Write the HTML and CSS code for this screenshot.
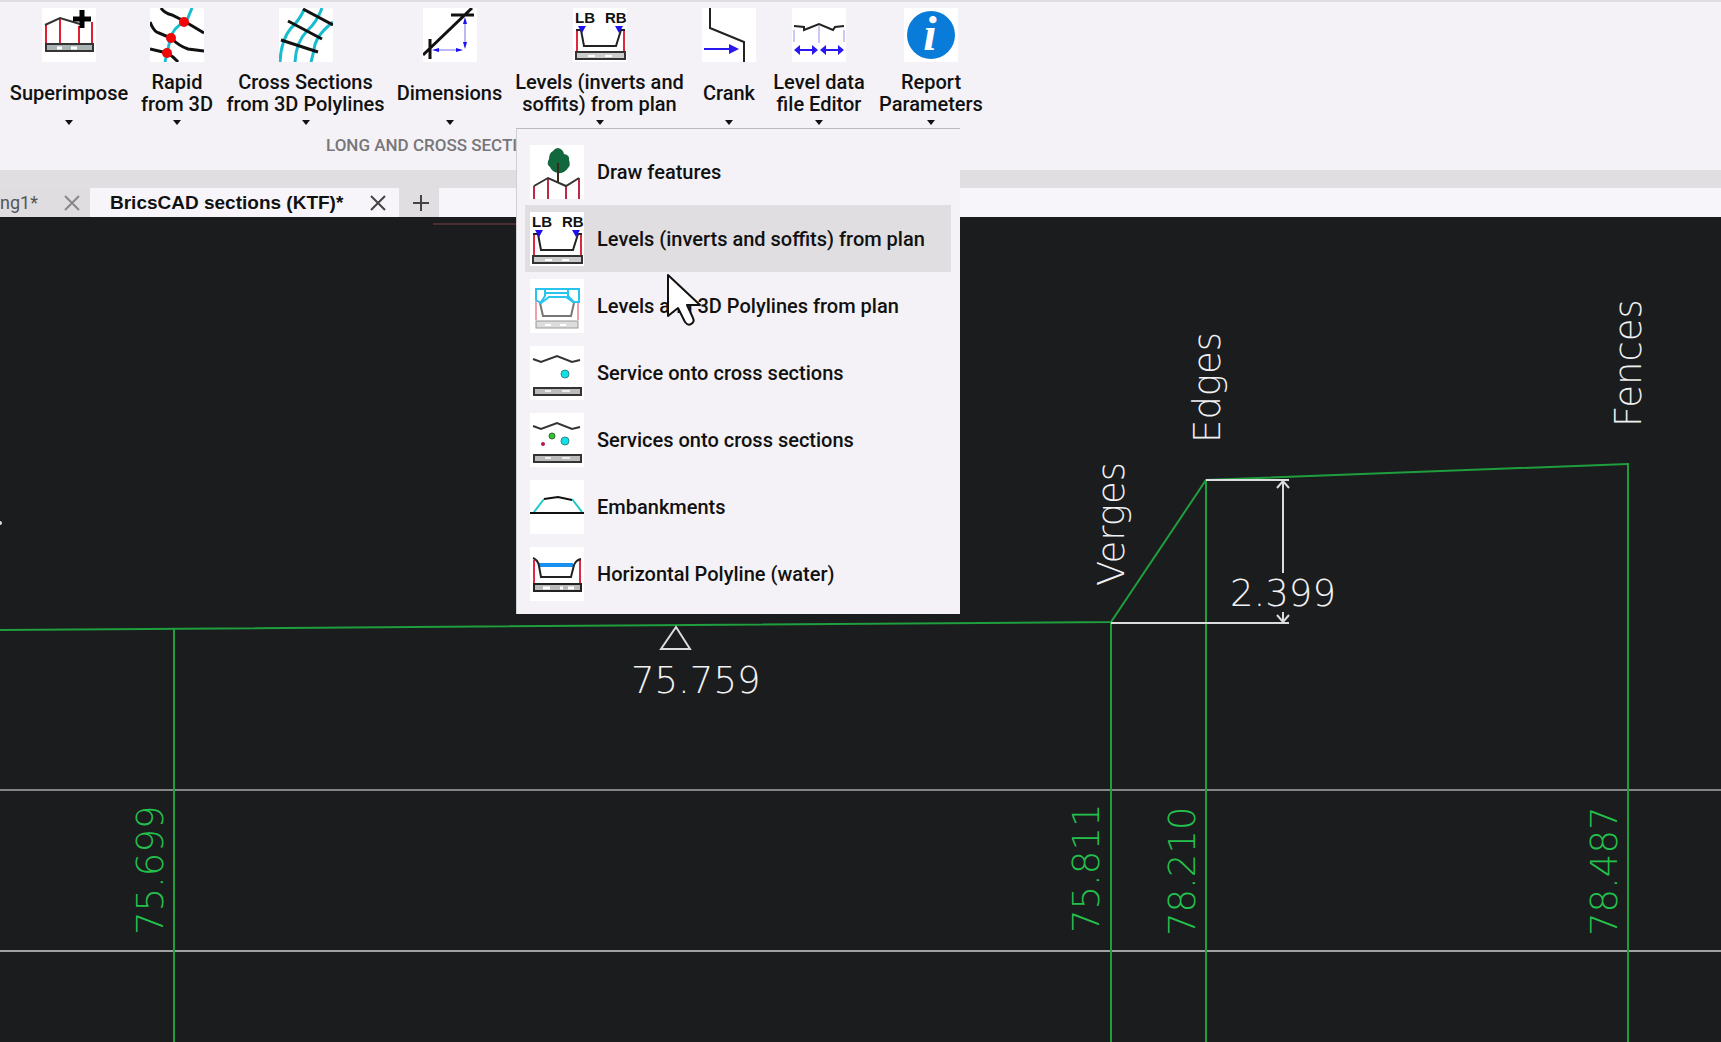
FILE: index.html
```html
<!DOCTYPE html>
<html lang="en">
<head>
<meta charset="utf-8">
<title>BricsCAD sections (KTF)</title>
<link rel="stylesheet" href="styles.css">
</head>
<body>
<header class="ribbon">
  <div class="tools">
    <div class="tool">
      <button class="tool-button" type="button">
        <svg class="icon" viewBox="0 0 54 54"><rect width="54" height="54" fill="#fff"/><path d="M4 17v18M18 11v24M37 18v17M50 14v21" stroke="#e02030" stroke-width="2"/><path d="M3 17l15-7 20 6" fill="none" stroke="#333" stroke-width="2"/><rect x="4" y="36" width="47" height="7" fill="#aab4b4" stroke="#333" stroke-width="2"/><path d="M15 40h5M29 40h6" stroke="#fff" stroke-width="3"/><path d="M40 2v18M31 11h18" stroke="#000" stroke-width="5"/></svg>
        <span class="tool-label">Superimpose</span>
        <span class="arrow"></span>
      </button>
    </div>
    <div class="tool">
      <button class="tool-button" type="button">
        <svg class="icon" viewBox="0 0 54 54"><rect width="54" height="54" fill="#fff"/><path d="M42 0l-5 12Q22 20 20 32l-5 22" fill="none" stroke="#18bcd0" stroke-width="3"/><path d="M11 0q3 5 11 7l12 6 20 12M0 14q4 10 9 11l12 5q8 8 17 11l16 2M0 41l17 4q6 3 11 9" fill="none" stroke="#111" stroke-width="3"/><g fill="#f00808"><circle cx="34" cy="14" r="5"/><circle cx="21" cy="30" r="5"/><circle cx="17" cy="45" r="5"/></g></svg>
        <span class="tool-label">Rapid<br>from 3D</span>
        <span class="arrow"></span>
      </button>
    </div>
    <div class="tool">
      <button class="tool-button" type="button">
        <svg class="icon" viewBox="0 0 54 54"><rect width="54" height="54" fill="#fff"/><path d="M25 2Q19 14 12 20 2 32 1 54M43 0Q38 14 28 23 17 34 16 54M54 14Q36 28 35 42l-3 12" fill="none" stroke="#18bcd0" stroke-width="3"/><path d="M24 1l30 16M9 13l34 18M2 32l37 12" stroke="#111" stroke-width="3"/></svg>
        <span class="tool-label">Cross Sections<br>from 3D Polylines</span>
        <span class="arrow"></span>
      </button>
    </div>
    <div class="tool">
      <button class="tool-button" type="button">
        <svg class="icon" viewBox="0 0 54 54"><rect width="54" height="54" fill="#fff"/><path d="M0 47L49 0M28 7h23M7 31v20" stroke="#111" stroke-width="3"/><path d="M42 12v26M12 42h26" stroke="#7a70f0"/><path d="M42 9l2 7h-4zM42 41l2-7h-4zM9 42l7-2v4zM40 42l-7-2v4z" fill="#1c10f0"/></svg>
        <span class="tool-label">Dimensions</span>
        <span class="arrow"></span>
      </button>
    </div>
    <div class="tool">
      <button class="tool-button" type="button" aria-expanded="true">
        <svg class="icon" viewBox="0 0 54 54">
          <g id="banks">
            <rect width="54" height="54" fill="#fff"/>
            <text class="bank-text" x="2" y="15">LB</text>
            <text class="bank-text" x="32" y="15">RB</text>
            <path d="M4 23v21M51 23v21" stroke="#e0283c" stroke-width="2"/>
            <path d="M3 22h5l3 16h32l5-16h4" fill="none" stroke="#222" stroke-width="2"/>
            <path d="M5 18h8l-4 7zM42 18h8l-4 7z" fill="#1c10f0"/>
            <rect x="3" y="44" width="49" height="7" fill="#ccc" stroke="#333" stroke-width="2"/>
            <path d="M15 48h7M32 48h7" stroke="#fff" stroke-width="2"/>
          </g>
        </svg>
        <span class="tool-label">Levels (inverts and<br>soffits) from plan</span>
        <span class="arrow"></span>
      </button>
      <div class="menu">
        <button class="menu-item" type="button">
          <svg class="icon" viewBox="0 0 54 54"><rect width="54" height="54" fill="#fff"/><path d="M4 41v13M18 34v20M36 41v13M49 33v21" stroke="#c02848" stroke-width="2"/><path d="M4 41l14-8 18 8 13-8" fill="none" stroke="#333" stroke-width="2"/><path d="M28 3q5 1 6 6 6 1 5 6 2 5-1 8-4 6-10 5-6-1-8-6-4-3-1-8 0-6 4-8 2-3 5-3z" fill="#12673c"/><path d="M28 18v19" stroke="#3a2a1c" stroke-width="2"/></svg>
          Draw features
        </button>
        <button class="menu-item active" type="button">
          <svg class="icon" viewBox="0 0 54 54"><use href="#banks"/></svg>
          Levels (inverts and soffits) from plan
        </button>
        <button class="menu-item" type="button">
          <svg class="icon" viewBox="0 0 54 54"><rect width="54" height="54" fill="#fff"/><path d="M6 22v19M48 22v19" stroke="#f0a0ac" stroke-width="2"/><path d="M10 24l3 13h28l3-13" fill="none" stroke="#777" stroke-width="2"/><rect x="6" y="42" width="42" height="7" fill="#ddd" stroke="#999"/><path d="M15 46h6M30 46h6" stroke="#fff" stroke-width="2"/><path d="M6 10h43v13h-6l-7-5H19l-8 6-5-3zM15 10v7l-4 6M38 10v7l6 6M15 14h23" fill="none" stroke="#28c4ee" stroke-width="2"/></svg>
          Levels and 3D Polylines from plan
        </button>
        <button class="menu-item" type="button">
          <svg class="icon" viewBox="0 0 54 54"><rect width="54" height="54" fill="#fff"/><path d="M3 13l8 3 16-6 15 6 8-2" fill="none" stroke="#333" stroke-width="2"/><circle cx="35" cy="28" r="4" fill="#10e0e8" stroke="#388"/><rect x="4" y="42" width="47" height="7" fill="#bbb" stroke="#333" stroke-width="2"/><path d="M15 45h6M32 45h8" stroke="#eee" stroke-width="2"/></svg>
          Service onto cross sections
        </button>
        <button class="menu-item" type="button">
          <svg class="icon" viewBox="0 0 54 54"><rect width="54" height="54" fill="#fff"/><path d="M3 13l8 3 16-6 15 6 8-2" fill="none" stroke="#333" stroke-width="2"/><circle cx="35" cy="28" r="4" fill="#10e0e8" stroke="#388"/><circle cx="22" cy="23" r="3" fill="#30c830" stroke="#363"/><circle cx="13" cy="31" r="2" fill="#b0184c"/><rect x="4" y="42" width="47" height="7" fill="#bbb" stroke="#333" stroke-width="2"/><path d="M15 45h6M32 45h8" stroke="#eee" stroke-width="2"/></svg>
          Services onto cross sections
        </button>
        <button class="menu-item" type="button">
          <svg class="icon" viewBox="0 0 54 54"><rect width="54" height="54" fill="#fff"/><path d="M4 32l10-13M42 19l10 13" stroke="#20c8c8" stroke-width="2"/><path d="M14 19l14-2 14 3" fill="none" stroke="#111" stroke-width="2"/><path d="M0 33h54" stroke="#111" stroke-width="2"/></svg>
          Embankments
        </button>
        <button class="menu-item" type="button">
          <svg class="icon" viewBox="0 0 54 54"><rect width="54" height="54" fill="#fff"/><path d="M4 13v23M50 13v23" stroke="#e02848" stroke-width="2"/><path d="M9 18h34" stroke="#1890f0" stroke-width="4"/><path d="M3 11q5 2 6 8l2 11h30l3-12q2-5 7-6" fill="none" stroke="#222" stroke-width="2"/><rect x="4" y="37" width="47" height="7" fill="#bbb" stroke="#222" stroke-width="2"/><path d="M13 41h7M30 41h3M38 41h6" stroke="#fff" stroke-width="3"/></svg>
          Horizontal Polyline (water)
        </button>
        <svg class="cursor" viewBox="0 0 40 56" aria-hidden="true"><path d="M3 3v41l10-8 7 14q3 4 6 2 4-2 2-6l-6-13h13z" fill="#fff" stroke="#111" stroke-width="2" stroke-linejoin="round"/></svg>
      </div>
    </div>
    <div class="tool">
      <button class="tool-button" type="button">
        <svg class="icon" viewBox="0 0 54 54"><rect width="54" height="54" fill="#fff"/><path d="M8 0v20l34 14v20" fill="none" stroke="#222" stroke-width="2"/><path d="M2 41h26" stroke="#2a18f0" stroke-width="2"/><path d="M27 36l10 5-10 5z" fill="#2a18f0"/></svg>
        <span class="tool-label">Crank</span>
        <span class="arrow"></span>
      </button>
    </div>
    <div class="tool">
      <button class="tool-button" type="button">
        <svg class="icon" viewBox="0 0 54 54"><rect width="54" height="54" fill="#fff"/><path d="M2 22v12M27 18v17M52 22v12" stroke="#9a90e8"/><path d="M2 18l10 1v3l15-6 14 6 2-3 9-1" fill="none" stroke="#222" stroke-width="2"/><path d="M6 42h16M32 42h16" stroke="#2a18f0" stroke-width="2"/><path d="M2 42l6-5v10zM26 42l-6-5v10zM28 42l6-5v10zM52 42l-6-5v10z" fill="#2a18f0"/></svg>
        <span class="tool-label">Level data<br>file Editor</span>
        <span class="arrow"></span>
      </button>
    </div>
    <div class="tool">
      <button class="tool-button" type="button">
        <svg class="icon" viewBox="0 0 54 54"><rect width="54" height="54" fill="#fff"/><circle cx="27" cy="27" r="24" fill="#087cd8"/><text class="info-text" x="26" y="42">i</text></svg>
        <span class="tool-label">Report<br>Parameters</span>
        <span class="arrow"></span>
      </button>
    </div>
  </div>
  <div class="panel-title">LONG AND CROSS SECTIONS</div>
</header>

<nav class="tabs">
  <div class="tab tab-first"><span>ng1*</span>
    <button class="close" type="button" aria-label="Close"><svg viewBox="0 0 16 16"><path d="M1 1l14 14M15 1L1 15"/></svg></button>
  </div>
  <div class="tab tab-current"><span>BricsCAD sections (KTF)*</span>
    <button class="close" type="button" aria-label="Close"><svg viewBox="0 0 16 16"><path d="M1 1l14 14M15 1L1 15"/></svg></button>
  </div>
  <button class="tab-add" type="button" aria-label="New drawing"><svg viewBox="0 0 16 16"><path d="M8 0v16M0 8h16"/></svg></button>
</nav>

<main class="canvas">
  <svg class="drawing">
    <path d="M433 7H960" stroke="#7c4045"/>
    <circle cx="0" cy="306" r="2" fill="#ddd"/>
    <g class="grid-line">
      <line x1="0" y1="573" x2="100%" y2="573" stroke="#858588"/>
      <line x1="0" y1="734" x2="100%" y2="734" stroke="#a2a2a5"/>
    </g>
    <g class="section">
      <polyline points="0,413 1111,405 1206,263 1628,247"/>
      <line x1="174" y1="412" x2="174" y2="100%"/>
      <line x1="1111" y1="405" x2="1111" y2="100%"/>
      <line x1="1206" y1="263" x2="1206" y2="100%"/>
      <line x1="1628" y1="246" x2="1628" y2="100%"/>
    </g>
    <g class="dimension">
      <path d="M1206 263h83M1111 406h178M1283 264v92M1283 395v10M1277 271l6-7 6 7M1277 398l6 7 6-7M676 410l14 22h-29z"/>
    </g>
    <g class="note">
      <text x="631" y="476">75.759</text>
      <text x="1230" y="389">2.399</text>
      <text transform="translate(1124 369) rotate(-90)">Verges</text>
      <text transform="translate(1220 226) rotate(-90)">Edges</text>
      <text transform="translate(1641 210) rotate(-90)">Fences</text>
    </g>
    <g class="note level">
      <text transform="translate(163 718) rotate(-90)">75.699</text>
      <text transform="translate(1099 716) rotate(-90)">75.811</text>
      <text transform="translate(1195 719) rotate(-90)">78.210</text>
      <text transform="translate(1617 719) rotate(-90)">78.487</text>
    </g>
  </svg>
</main>
</body>
</html>
```

FILE: styles.css
```css
* {
  box-sizing: border-box;
}

body {
  margin: 0;
  min-height: 100vh;
  display: flex;
  flex-direction: column;
  overflow: hidden;
  background: #1b1c1e;
  color: #111;
  font-family: Roboto, "Liberation Sans", sans-serif;
}

button {
  border: 0;
  padding: 0;
  background: none;
  color: inherit;
  font: inherit;
}

.ribbon {
  background: #f4f2f6;
  border-top: 2px solid #dedce0;
  border-bottom: 18px solid #e0dee1;
}

.tools {
  display: grid;
  grid-template-columns: 130px 86px 171px 117px 183px 76px 104px 120px;
  padding: 6px 4px 0;
}

.tool {
  position: relative;
}

.tool-button {
  display: flex;
  flex-direction: column;
  align-items: center;
  width: 100%;
  height: 120px;
  font-size: 20px;
  font-weight: 500;
  line-height: 22px;
  white-space: nowrap;
}

.icon {
  display: block;
  flex: none;
  width: 54px;
  height: 54px;
}

.tool-label {
  display: flex;
  align-items: center;
  height: 44px;
  margin: 9px 0 5px;
}

.arrow {
  border: 4px solid transparent;
  border-top: 5px solid #111;
  border-bottom: 0;
}

.bank-text {
  font: bold 15px "Liberation Sans", sans-serif;
  fill: #111;
}

.info-text {
  font: italic bold 48px "Liberation Serif", serif;
  fill: #fff;
  text-anchor: middle;
}

.panel-title {
  padding: 6px 0 14px 326px;
  color: #77767a;
  font-size: 17px;
  font-weight: 500;
  line-height: 22px;
}

.menu {
  position: absolute;
  z-index: 1;
  top: 100%;
  left: 8px;
  width: 444px;
  padding: 9px 9px 7px 8px;
  background: #f4f2f6;
  border-top: 1px solid #b9b8bb;
  border-left: 1px solid #d0cfd2;
}

.menu-item {
  display: flex;
  align-items: center;
  gap: 13px;
  width: 100%;
  height: 67px;
  padding-left: 5px;
  font-size: 20px;
  font-weight: 500;
  white-space: nowrap;
}

.menu-item.active {
  background: #e0dee1;
}

.cursor {
  position: absolute;
  top: 143px;
  left: 148px;
  width: 40px;
  height: 56px;
}

.tabs {
  display: flex;
  height: 29px;
  background: #f7f5f9;
}

.tab {
  display: flex;
  align-items: center;
  justify-content: space-between;
  white-space: nowrap;
}

.tab-first {
  width: 90px;
  padding-right: 10px;
  background: #dfdde0;
  color: #555;
  font-size: 18px;
}

.tab-current {
  width: 309px;
  padding: 0 13px 0 20px;
  font: bold 19px "Liberation Sans", sans-serif;
}

.close svg,
.tab-add svg {
  display: block;
  width: 16px;
  height: 16px;
  fill: none;
  stroke: #444;
  stroke-width: 2;
}

.tab-first .close svg {
  stroke: #888;
}

.tab-add {
  display: flex;
  align-items: center;
  justify-content: center;
  width: 40px;
  padding-left: 4px;
  background: #e0dee1;
}

.canvas {
  display: flex;
  flex: 1;
  min-height: 420px;
}

.drawing {
  flex: 1;
  width: 100%;
}

.grid-line line {
  stroke-width: 2;
}

.section {
  fill: none;
  stroke: #1f9e3e;
  stroke-width: 2;
}

.dimension {
  fill: none;
  stroke: #dcdcde;
  stroke-width: 2;
}

.note {
  font-family: "DejaVu Sans", "DejaVu Sans Light", sans-serif;
  font-size: 37px;
  font-weight: 200;
  fill: #f0f0f2;
}

.level {
  fill: #24c04c;
}
```
